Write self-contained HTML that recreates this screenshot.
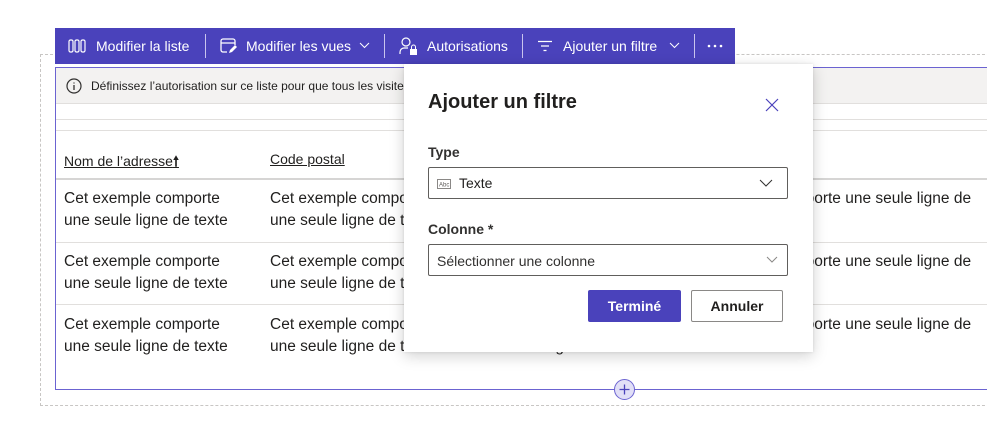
<!DOCTYPE html>
<html><head><meta charset="utf-8"><style>
*{box-sizing:border-box;margin:0;padding:0}
body{width:987px;height:432px;background:#fff;font-family:"Liberation Sans",sans-serif;color:#201f1e;position:relative;overflow:hidden}
.abs{position:absolute}
.tb{left:55px;top:28px;width:680px;height:36px;background:#4a42bb;color:#fff;font-size:14px}
.tb span{position:absolute;top:10px;white-space:nowrap}
.sep{position:absolute;top:6px;width:1px;height:24px;background:#c9c4ee}
.cell{position:absolute;font-size:15.5px;line-height:22px;width:180px}
.hl{position:absolute;left:56px;width:931px;height:1px;background:#e1dfdd}
</style></head><body>
<div class="abs" style="left:40px;top:54px;width:960px;height:352px;border:1px dashed #c8c6c4"></div>
<div class="abs" style="left:55px;top:67px;width:940px;height:323px;border:1px solid #6b63d1;border-right:none;background:#fff"></div>
<div class="abs" style="left:56px;top:68px;width:931px;height:36px;background:#f3f2f1;border-bottom:1px solid #e1dfdd;font-size:12px">
<svg class="abs" style="left:10px;top:10px" width="16" height="16" viewBox="0 0 16 16"><circle cx="8" cy="8" r="7" fill="none" stroke="#323130" stroke-width="1.2"/><path d="M8 7v5M8 4.5v1" stroke="#323130" stroke-width="1.3"/></svg>
<span class="abs" style="left:35px;top:11px;white-space:nowrap">Définissez l’autorisation sur ce liste pour que tous les visiteurs</span></div>
<div class="hl" style="top:119px"></div><div class="hl" style="top:130px"></div>
<div class="abs" style="left:64px;top:151px;font-size:14px;text-decoration:underline">Nom de l’adresse<b style="text-decoration:none">🠕</b></div>
<div class="abs" style="left:270px;top:151px;font-size:14px;text-decoration:underline">Code postal</div>
<div class="hl" style="top:178px;height:2px;background:#d6d5d4"></div>
<div class="hl" style="top:242px"></div><div class="hl" style="top:304px"></div>
<div class="cell" style="left:64px;top:188px">Cet exemple comporte une seule ligne de texte</div>
<div class="cell" style="left:270px;top:188px">Cet exemple comporte une seule ligne de texte</div>
<div class="cell" style="left:64px;top:251px">Cet exemple comporte une seule ligne de texte</div>
<div class="cell" style="left:270px;top:251px">Cet exemple comporte une seule ligne de texte</div>
<div class="cell" style="left:64px;top:314px">Cet exemple comporte une seule ligne de texte</div>
<div class="cell" style="left:270px;top:314px">Cet exemple comporte une seule ligne de texte</div>
<div class="cell" style="left:477px;top:314px">Cet exemple comporte une seule ligne de texte</div>
<div class="cell" style="left:685px;top:188px;width:300px">Cet exemple comporte une seule ligne de texte</div>
<div class="cell" style="left:685px;top:251px;width:300px">Cet exemple comporte une seule ligne de texte</div>
<div class="cell" style="left:685px;top:314px;width:300px">Cet exemple comporte une seule ligne de texte</div>
<svg class="abs" style="left:613px;top:378px" width="23" height="23"><circle cx="11.5" cy="11.5" r="10" fill="#e1dff7" stroke="#6b63d1"/><path d="M11.5 6.5v10M6.5 11.5h10" stroke="#4a42bb" stroke-width="1.3"/></svg>
<div class="abs tb">
<svg class="abs" style="left:13px;top:11px" width="18" height="14"><rect x="1" y="1" width="4" height="12" rx="1.5" fill="none" stroke="#fff" stroke-width="1.2"/><rect x="7" y="1" width="4" height="12" rx="1.5" fill="none" stroke="#fff" stroke-width="1.2"/><rect x="13" y="1" width="4" height="12" rx="1.5" fill="none" stroke="#fff" stroke-width="1.2"/></svg>
<span style="left:41px">Modifier la liste</span>
<div class="sep" style="left:150px"></div>
<svg class="abs" style="left:165px;top:10px" width="18" height="17"><path d="M7 14H3a2 2 0 0 1-2-2V3a2 2 0 0 1 2-2h10a2 2 0 0 1 2 2v4M1 5h14" fill="none" stroke="#fff" stroke-width="1.3"/><path d="M9 15l1-3 5-5 2 2-5 5z" fill="#fff"/></svg>
<span style="left:191px">Modifier les vues</span>
<svg class="abs" style="left:304px;top:14px" width="11" height="7"><path d="M1 1l4.5 4.5L10 1" fill="none" stroke="#fff"/></svg>
<div class="sep" style="left:329px"></div>
<svg class="abs" style="left:344px;top:9px" width="20" height="19"><circle cx="7" cy="5" r="4" fill="none" stroke="#fff" stroke-width="1.2"/><path d="M1 17v-2a4 4 0 0 1 4-4h4" fill="none" stroke="#fff" stroke-width="1.2"/><rect x="11" y="12" width="7" height="6" fill="#fff"/><path d="M12.5 12v-2a2 2 0 0 1 4 0v2" fill="none" stroke="#fff"/></svg>
<span style="left:372px">Autorisations</span>
<div class="sep" style="left:467px"></div>
<svg class="abs" style="left:482px;top:12px" width="16" height="12"><path d="M1 1.5h14M4 6h8M6.5 10.5h3" stroke="#fff" stroke-width="1.2"/></svg>
<span style="left:508px">Ajouter un filtre</span>
<svg class="abs" style="left:614px;top:14px" width="11" height="7"><path d="M1 1l4.5 4.5L10 1" fill="none" stroke="#fff"/></svg>
<div class="sep" style="left:639px"></div>
<svg class="abs" style="left:652px;top:16px" width="16" height="4"><circle cx="2" cy="2" r="1.3" fill="#fff"/><circle cx="8" cy="2" r="1.3" fill="#fff"/><circle cx="14" cy="2" r="1.3" fill="#fff"/></svg>
</div>
<div class="abs" style="left:404px;top:64px;width:409px;height:288px;background:#fff;box-shadow:0 4px 14px rgba(0,0,0,.18),0 0 3px rgba(0,0,0,.1)">
<div class="abs" style="left:24px;top:27px;font-size:20px;font-weight:bold">Ajouter un filtre</div>
<svg class="abs" style="left:361px;top:34px" width="14" height="14"><path d="M1 1l12 12M13 1L1 13" stroke="#4a42bb" stroke-width="1.2"/></svg>
<div class="abs" style="left:24px;top:80px;font-size:14px;font-weight:bold;color:#323130">Type</div>
<div class="abs" style="left:24px;top:103px;width:360px;height:32px;border:1px solid #605e5c;border-radius:2px">
<svg class="abs" style="left:8px;top:11px" width="14" height="10"><rect x=".5" y=".5" width="13" height="9" fill="none" stroke="#8a8886"/><text x="2" y="7.5" font-size="6" fill="#605e5c" font-family="Liberation Sans">Abc</text></svg>
<span class="abs" style="left:30px;top:7px;font-size:14px">Texte</span>
<svg class="abs" style="left:330px;top:11px" width="14" height="8"><path d="M1 1l6 6 6-6" fill="none" stroke="#323130"/></svg></div>
<div class="abs" style="left:24px;top:157px;font-size:14px;font-weight:bold;color:#323130">Colonne *</div>
<div class="abs" style="left:24px;top:180px;width:360px;height:32px;border:1px solid #605e5c;border-radius:2px">
<span class="abs" style="left:8px;top:8px;font-size:14px;color:#323130">Sélectionner une colonne</span>
<svg class="abs" style="left:337px;top:11px" width="12" height="7"><path d="M1 1l5 5 5-5" fill="none" stroke="#8a8886"/></svg></div>
<div class="abs" style="left:184px;top:226px;width:93px;height:32px;background:#4a42bb;border-radius:2px;color:#fff;font-size:14px;font-weight:bold;text-align:center;line-height:32px">Terminé</div>
<div class="abs" style="left:287px;top:226px;width:92px;height:32px;border:1px solid #8a8886;border-radius:2px;font-size:14px;font-weight:bold;text-align:center;line-height:30px">Annuler</div>
</div>
</body></html>
